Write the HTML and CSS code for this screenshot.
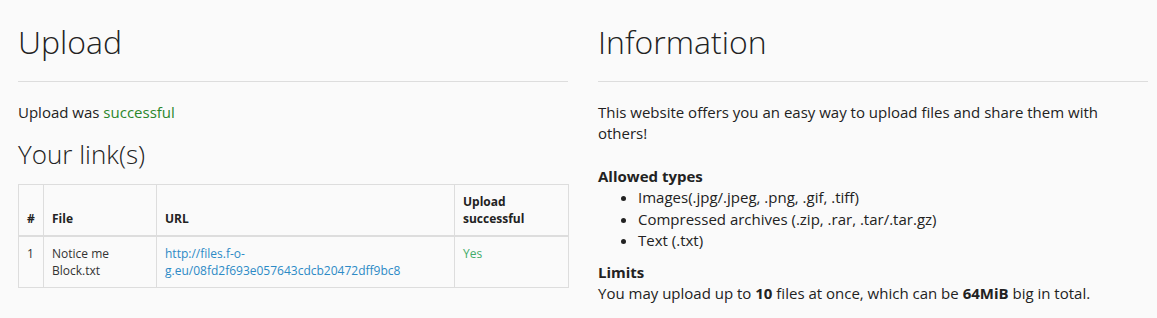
FILE: index.html
```html
<!DOCTYPE html>
<html lang="en">
    <head>
        <meta charset="UTF-8">
        <meta name="viewport" content="width=device-width, initial-scale=1.0">
        <title>Upload</title>
        <link rel="stylesheet" href="styles.css">
    </head>
    <body>
        <div class="row">
            <div class="col">
                <h2>Upload</h2>
                <hr>
                <p>Upload was <span class="text-success">successful</span></p>
                <h3>Your link(s)</h3>
                <table class="table">
                    <colgroup>
                        <col class="col-num">
                        <col class="col-file">
                        <col class="col-url">
                        <col class="col-ok">
                    </colgroup>
                    <thead>
                        <tr>
                            <th>#</th>
                            <th>File</th>
                            <th>URL</th>
                            <th>Upload successful</th>
                        </tr>
                    </thead>
                    <tbody>
                        <tr>
                            <td>1</td>
                            <td>Notice me Block.txt</td>
                            <td><a href="#">http://files.f-o-g.eu/08fd2f693e057643cdcb20472dff9bc8</a></td>
                            <td class="yes">Yes</td>
                        </tr>
                    </tbody>
                </table>
            </div>
            <div class="col">
                <h2>Information</h2>
                <hr>
                <p class="intro">This website offers you an easy way to upload files and share them with others!</p>
                <b>Allowed types</b>
                <ul>
                    <li>Images(.jpg/.jpeg, .png, .gif, .tiff)</li>
                    <li>Compressed archives (.zip, .rar, .tar/.tar.gz)</li>
                    <li>Text (.txt)</li>
                </ul>
                <b>Limits</b><br>
                You may upload up to <b>10</b> files at once, which can be <b>64MiB</b> big in total.
            </div>
        </div>
    </body>
</html>
```

FILE: styles.css
```css
body {
    font-family: "Open Sans", Arial, sans-serif;
    font-size: 15px;
    line-height: 1.42857;
    color: #222;
    background-color: #fafafa;
    margin: 0;
}

.row {
    display: flex;
    gap: 30px;
    padding: 0 9px 0 18px;
}

.col {
    flex: 1;
    min-width: 0;
}

h2 {
    font-size: 32px;
    font-weight: 300;
    line-height: 35px;
    margin: 24px 0 0;
}

h3 {
    font-size: 26px;
    font-weight: 300;
    line-height: 29px;
    margin: 17px 0 15px;
}

hr {
    border: none;
    border-top: 1px solid #ddd;
    margin: 22px 0 20px;
}

p {
    margin: 0;
}

.intro {
    margin-bottom: 21px;
}

.text-success {
    color: #2b862b;
}

b {
    font-weight: 700;
}

ul {
    margin: 0 0 10px;
    padding-left: 40px;
}

.table {
    width: 100%;
    border-collapse: collapse;
    table-layout: fixed;
    font-size: 12px;
    line-height: 17px;
}

.col-num { width: 25px; }
.col-file { width: 113px; }
.col-url { width: 298px; }
.col-ok { width: 114px; }

.table th, .table td {
    border: 1px solid #ddd;
    padding: 8px;
    text-align: left;
}

.table th {
    vertical-align: bottom;
    font-weight: 700;
    border-bottom: 2px solid #ddd;
}

.table td {
    vertical-align: top;
    color: #333;
}

.table a {
    color: #2c8ac6;
    text-decoration: none;
}

.table .yes {
    color: #43ac6a;
}
```
